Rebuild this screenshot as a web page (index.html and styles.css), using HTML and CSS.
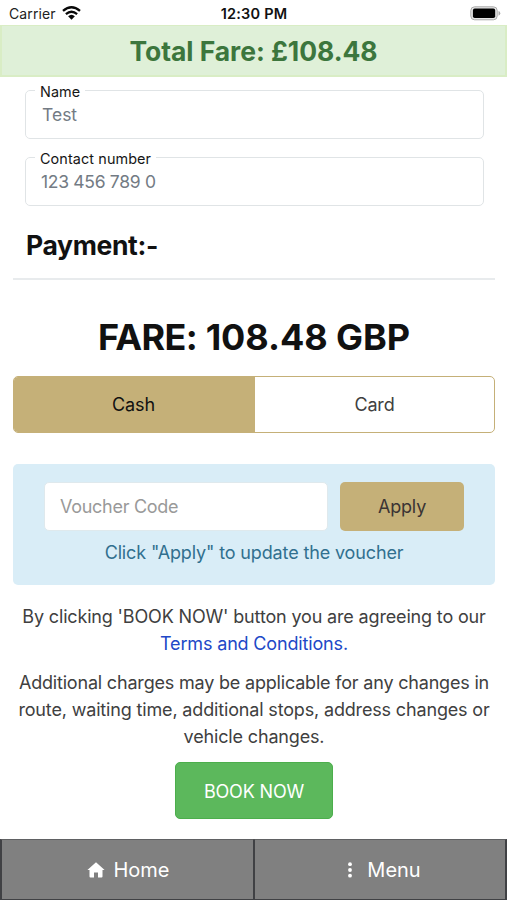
FILE: index.html
```html
<!DOCTYPE html>
<html lang="en">
<head>
<meta charset="utf-8">
<title>Payment</title>
<link rel="stylesheet" href="styles.css">
</head>
<body>
<div class="screen">
  <header class="status">
    <div class="carrier"><span>Carrier</span>
      <svg width="19" height="14" viewBox="0 0 19 14" fill="none" stroke="#080808" stroke-width="2.3"><path d="M1 4.9Q9.500-2.500 18 4.900"/><path d="M3.900 8.100Q9.500 3.300 15.100 8.100"/><path d="M6.100 10.300Q9.500 7.100 12.900 10.300L9.500 13.700Z" fill="#080808" stroke="none"/></svg>
    </div>
    <span class="time">12:30 PM</span>
    <svg class="battery" width="31" height="15" viewBox="0 0 31 15"><rect x=".8" y=".8" width="26.400" height="13" rx="3.800" fill="#e6e6e6" stroke="#aaa" stroke-width="1"/><rect x="2.900" y="2.600" width="22.300" height="9.400" rx="1.800" fill="#000"/><path d="M28.500 5Q30.300 5.600 30.300 7.300T28.500 9.700Z" fill="#aaa"/></svg>
  </header>
  <div class="total"><span>Total Fare: £108.48</span></div>
  <main>
    <fieldset class="field"><legend>Name</legend><span class="value test">Test</span></fieldset>
    <fieldset class="field second"><legend class="contact">Contact number</legend><span class="value phone">123 456 789 0</span></fieldset>
    <h2><span>Payment:-</span></h2>
    <h1><span class="label">FARE:</span> <span>108.48 GBP</span></h1>
    <div class="methods"><div class="cash"><span>Cash</span></div><div class="card"><span>Card</span></div></div>
    <section class="voucher">
      <div class="row"><div class="code"><span>Voucher Code</span></div><div class="apply"><span>Apply</span></div></div>
      <p><span>Click "Apply" to update the voucher</span></p>
    </section>
    <p class="terms"><span>By clicking 'BOOK NOW' button you are agreeing to our</span><br><a>Terms and Conditions.</a></p>
    <p class="extra"><span class="e1">Additional charges may be applicable for any changes in</span><br><span>route, waiting time, additional stops, address changes or</span><br><span>vehicle changes.</span></p>
    <div class="book"><span>BOOK NOW</span></div>
  </main>
  <nav>
    <div class="tab"><svg width="18" height="16" viewBox="0 0 18 16"><path d="M9 .2L17.600 8H15.500V14.500Q15.500 15.500 14.500 15.500H11V10.500H7V15.500H3.500Q2.500 15.500 2.500 14.500V8H.4Z" fill="#fff"/></svg><span>Home</span></div>
    <div class="tab menu"><svg width="6" height="16" viewBox="0 0 6 16" fill="#fff"><circle cx="3" cy="2.200" r="1.900"/><circle cx="3" cy="8" r="1.900"/><circle cx="3" cy="13.700" r="1.900"/></svg><span>Menu</span></div>
  </nav>
</div>
</body>
</html>
```
FILE: styles.css
```css
* { box-sizing: border-box; }
body { margin: 0; background: #fff; font-family: Inter, "Liberation Sans", sans-serif; color: #404040; font-size: 18px; line-height: 27px; letter-spacing: -.16px; }
h1, h2, p { margin: 0; }
span, a { white-space: nowrap; }
.screen { width: 507px; height: 900px; display: flex; flex-direction: column; overflow: hidden; }
.status { height: 25px; display: grid; grid-template-columns: 1fr auto 1fr; align-items: center; padding: 2px 6px 0 9px; font-size: 14px; letter-spacing: .1px; line-height: 24px; color: #222; }
.carrier { display: flex; gap: 6px; align-items: center; }
.carrier svg { margin-top: -2px; }
.time { font-weight: 600; font-size: 14.500px; letter-spacing: .2px; color: #111; margin-right: 2px; }
.battery { justify-self: end; margin-top: -2px; }
.total { height: 52px; border: 2px solid #d9edc5; border-top-width: 1px; background: #dff0d8; color: #3c763d; font-weight: 700; font-size: 26.500px; letter-spacing: -.05px; display: flex; align-items: center; justify-content: center; padding-top: 1px; }
main { padding: 0 12px 0 13px; height: 762px; display: flex; flex-direction: column; }
.field { margin: 6px 11px 0 12px; padding: 0 14px; border: 1px solid #e0e4e6; border-radius: 5px; height: 56px; min-width: 0; }
.field.second { margin-top: 11px; }
.field legend { padding: 0 5px; margin-left: -5px; font-size: 14.400px; letter-spacing: .1px; line-height: 17px; height: 14px; color: #161616; }
.value { display: block; font-size: 17.500px; line-height: 22px; color: #737b84; margin-top: 7px; margin-left: 2px; }
.test { letter-spacing: 0; }
.phone { letter-spacing: -.3px; margin-left: 1px; }
h2 { height: 74px; border-bottom: 2px solid #e8ebed; padding: 19px 13px 0; font-size: 26.500px; letter-spacing: -.35px; line-height: 40px; font-weight: 700; color: #111; }
h1 { margin-top: 34px; text-align: center; font-size: 36px; letter-spacing: -.05px; line-height: 46px; height: 62px; font-weight: 700; color: #111; }
.label { letter-spacing: -.6px; }
.methods { display: grid; grid-template-columns: 241px 1fr; height: 57px; border: 1px solid #c5b078; border-radius: 5px; overflow: hidden; }
.methods div { display: flex; align-items: center; justify-content: center; }
.cash { background: #c5b078; color: #111; }
.cash span { margin-right: 2px; }
.voucher { margin-top: 31px; height: 121px; background: #d9edf7; border-radius: 5px; padding: 18px 30px 0 31px; color: #31708f; text-align: center; }
.row { display: grid; grid-template-columns: 284px 124px; gap: 12px; height: 49px; }
.code { background: #fff; border: 1px solid #dfe9ed; border-radius: 5px; display: flex; align-items: center; padding-left: 15px; color: #999; letter-spacing: -.28px; }
.apply { background: #c5b078; border-radius: 5px; display: flex; align-items: center; justify-content: center; color: #3b3434; }
.voucher p { margin: 8px 1px 0 0; letter-spacing: -.14px; }
.terms { margin-top: 18px; text-align: center; }
.terms a { color: #2148c7; }
.extra { margin-top: 12px; text-align: center; }
.e1 { letter-spacing: -.19px; }
.book { margin-top: 12px; align-self: center; width: 158px; height: 57px; background: #5cb85c; border: 1px solid #4cae4c; border-radius: 5px; color: #fff; display: flex; justify-content: center; align-items: center; padding-top: 1px; }
nav { height: 61px; display: grid; grid-template-columns: 254px 253px; }
.tab { background: #808080; border: 2px solid #404144; border-top: 1px solid #606163; border-right-width: 1px; border-bottom-width: 1px; display: flex; align-items: center; justify-content: center; gap: 8px; padding: 2px 0 0 2px; color: #fff; font-size: 20px; letter-spacing: 0; }
.tab svg { margin-top: -2px; }
.menu { gap: 14px; padding-left: 8px; border-right-width: 2px; border-left-width: 1px; }
```
